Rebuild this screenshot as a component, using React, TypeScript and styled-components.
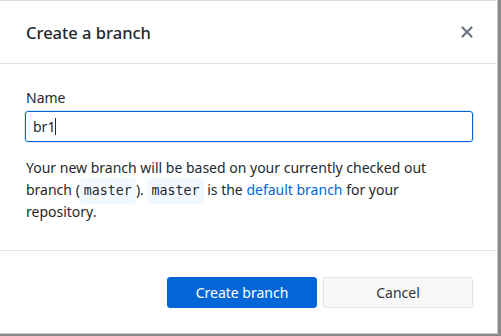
import React from "react";
import styled, { createGlobalStyle } from "styled-components";

const Global = createGlobalStyle`
  html, body { margin: 0; padding: 0; background: #8a8a8a; }
  body { font-family: "Noto Sans", "Open Sans", sans-serif; width: 501px; height: 336px; overflow: hidden; }
`;

const Dialog = styled.div`
  box-sizing: border-box;
  width: 498px;
  height: 334px;
  background: #fff;
  border-top: 1px solid #dcdcdc;
  border-right: 1px solid #c8c8c8;
  border-bottom: 1px solid #c8c8c8;
  display: flex;
  flex-direction: column;
  color: #24292e;
`;

const Header = styled.div`
  height: 63px;
  box-sizing: border-box;
  border-bottom: 1px solid #e1e4e8;
  display: flex;
  align-items: center;
  justify-content: space-between;
  padding: 0 20px 0 26px;
`;

const Title = styled.h1`
  margin: 0;
  font-size: 16.5px;
  font-weight: 500;
  color: #24292e;
`;

const Close = styled.button`
  border: 0;
  background: none;
  padding: 0;
  width: 20px;
  height: 20px;
  display: flex;
  align-items: center;
  justify-content: center;
  color: #6a737d;
`;

const Body = styled.div`
  box-sizing: border-box;
  height: 187px;
  padding: 24px 25px 0 26px;
  border-bottom: 1px solid #e1e4e8;
`;

const Label = styled.label`
  display: block;
  font-size: 14px;
  line-height: 20px;
  color: #24292e;
`;

const Input = styled.div`
  box-sizing: border-box;
  margin-top: 3px;
  margin-left: -1px;
  height: 31px;
  width: 448px;
  border: 1px solid #0366d6;
  border-radius: 3px;
  box-shadow: 0 0 0 1px rgba(3, 102, 214, 0.15);
  display: flex;
  align-items: center;
  padding-left: 7px;
  font-size: 14px;
  color: #24292e;
`;

const Caret = styled.span`
  display: inline-block;
  width: 1px;
  height: 17px;
  background: #24292e;
`;

const Text = styled.p`
  margin: 15px 0 0;
  font-size: 14px;
  line-height: 22px;
  color: #24292e;
`;

const Code = styled.code`
  display: inline-block;
  font-family: "DejaVu Sans Mono", "Liberation Mono", monospace;
  font-size: 13.3px;
  line-height: 18px;
  background: #f1f8ff;
  border-radius: 3px;
  padding: 0 4px;
  box-shadow: 0 -4px 0 #f1f8ff, 0 4px 0 #f1f8ff;
  vertical-align: baseline;
`;

const Link = styled.a`
  color: #0366d6;
  text-decoration: none;
`;

const Footer = styled.div`
  flex: 1;
  display: flex;
  justify-content: flex-end;
  align-items: flex-start;
  gap: 6px;
  padding: 26px 24px 0 0;
`;

const Button = styled.button<{ $primary?: boolean }>`
  box-sizing: border-box;
  width: 150px;
  height: 31px;
  border-radius: 3px;
  font-family: inherit;
  font-size: 14px;
  border: 1px solid ${(p) => (p.$primary ? "#0366d6" : "#e1e4e8")};
  background: ${(p) => (p.$primary ? "#0366d6" : "#f6f8fa")};
  color: ${(p) => (p.$primary ? "#fff" : "#333")};
`;

export default function App() {
  return (
    <>
      <Global />
      <Dialog>
        <Header>
          <Title>Create a branch</Title>
          <Close aria-label="Close">
            <svg width="12" height="12" viewBox="0 0 12 12">
              <path d="M1.5 1.5 L10.5 10.5 M10.5 1.5 L1.5 10.5" stroke="currentColor" strokeWidth="2.2" strokeLinecap="round" />
            </svg>
          </Close>
        </Header>
        <Body>
          <Label>Name</Label>
          <Input>
            br1<Caret />
          </Input>
          <Text>
            Your new branch will be based on your currently checked out branch (<Code>master</Code>).{" "}
            <Code>master</Code> is the <Link href="#">default branch</Link> for your
            <br />
            repository.
          </Text>
        </Body>
        <Footer>
          <Button $primary>Create branch</Button>
          <Button>Cancel</Button>
        </Footer>
      </Dialog>
    </>
  );
}
